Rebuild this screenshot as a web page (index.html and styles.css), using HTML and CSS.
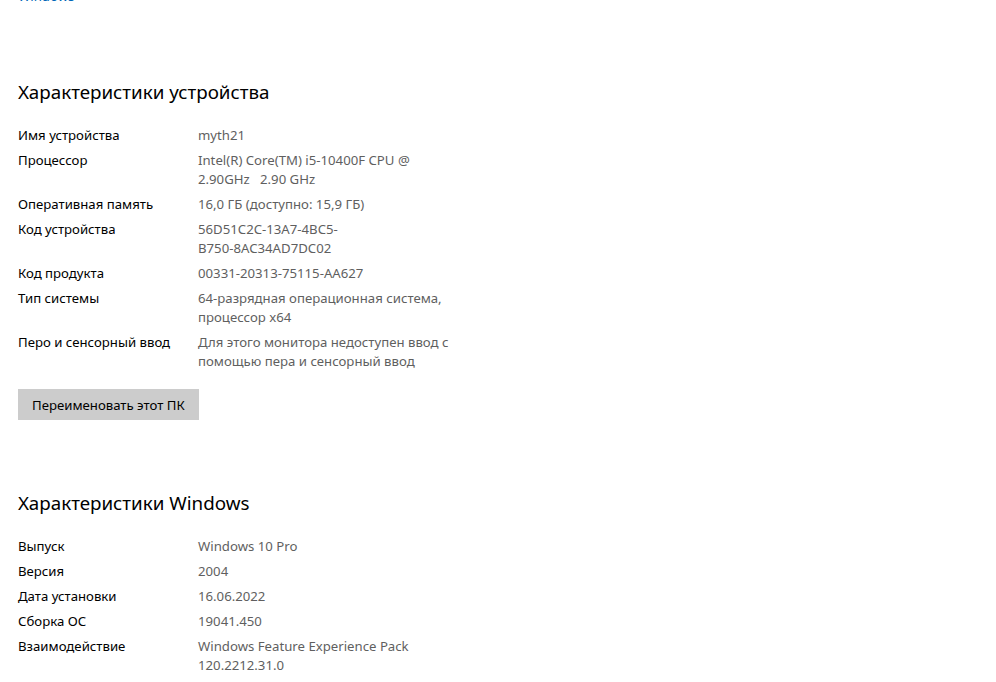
FILE: index.html
```html
<!DOCTYPE html>
<html lang="ru">
<head>
    <meta charset="UTF-8">
    <title>О программе</title>
    <link rel="stylesheet" href="styles.css">
</head>
<body>
    <div class="page">
        <a class="top-link" href="#">Windows</a>

        <h2 class="section-title">Характеристики устройства</h2>
        <dl class="specs">
            <dt>Имя устройства</dt>
            <dd>myth21</dd>
            <dt>Процессор</dt>
            <dd>Intel(R) Core(TM) i5-10400F CPU @ 2.90GHz&nbsp;&nbsp; 2.90 GHz</dd>
            <dt>Оперативная память</dt>
            <dd>16,0 ГБ (доступно: 15,9 ГБ)</dd>
            <dt>Код устройства</dt>
            <dd>56D51C2C-13A7-4BC5-<span class="nowrap">B750-8AC34AD7DC02</span></dd>
            <dt>Код продукта</dt>
            <dd>00331-20313-75115-AA627</dd>
            <dt>Тип системы</dt>
            <dd>64-разрядная операционная система, процессор x64</dd>
            <dt>Перо и сенсорный ввод</dt>
            <dd>Для этого монитора недоступен ввод с помощью пера и сенсорный ввод</dd>
        </dl>
        <button class="rename-btn">Переименовать этот ПК</button>

        <h2 class="section-title windows">Характеристики Windows</h2>
        <dl class="specs">
            <dt>Выпуск</dt>
            <dd>Windows 10 Pro</dd>
            <dt>Версия</dt>
            <dd>2004</dd>
            <dt>Дата установки</dt>
            <dd>16.06.2022</dd>
            <dt>Сборка ОС</dt>
            <dd>19041.450</dd>
            <dt>Взаимодействие</dt>
            <dd>Windows Feature Experience Pack 120.2212.31.0</dd>
        </dl>
    </div>
</body>
</html>
```

FILE: styles.css
```css
body {
    margin: 0;
    padding: 0;
    background: #fff;
    color: #000;
    font-family: "Noto Sans", "Open Sans", sans-serif;
    font-size: 13.2px;
    overflow: hidden;
}

.page {
    padding-left: 18px;
    display: flex;
    flex-direction: column;
    align-items: flex-start;
}

.top-link {
    display: block;
    margin-top: -13px;
    line-height: 19px;
    color: #0067b8;
    text-decoration: none;
}

.section-title {
    margin: 72px 0 0;
    font-size: 18.8px;
    font-weight: normal;
    line-height: 28px;
}

.section-title.windows {
    margin-top: 69px;
}

.specs {
    display: grid;
    grid-template-columns: 180px 262px;
    row-gap: 6px;
    margin: 20px 0 0;
    line-height: 19px;
}

.specs dt {
    margin: 0;
}

.specs dd {
    margin: 0;
    color: #5f5f5f;
}

.nowrap {
    white-space: nowrap;
}

.rename-btn {
    margin-top: 18px;
    height: 31px;
    padding: 0 14px;
    border: none;
    background: #cccccc;
    color: #000;
    font-family: inherit;
    font-size: 13.2px;
    cursor: pointer;
}
```
